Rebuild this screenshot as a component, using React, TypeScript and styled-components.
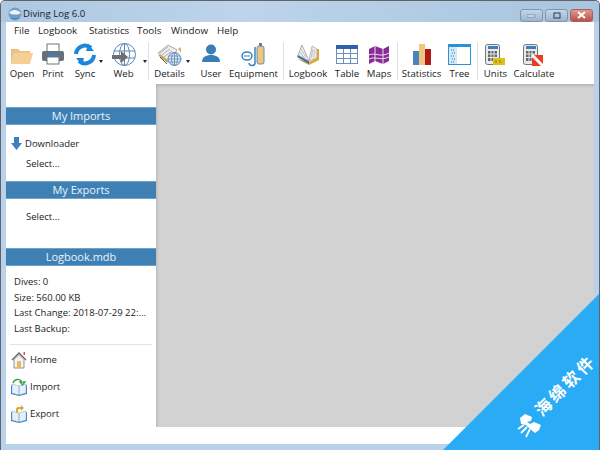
import React from "react";
import styled, { createGlobalStyle } from "styled-components";

const Global = createGlobalStyle`
  html, body { margin: 0; padding: 0; width: 600px; height: 450px; overflow: hidden; }
  body { font-family: "Open Sans", "Noto Sans", "Liberation Sans", sans-serif; }
`;
const Win = styled.div`
  position: relative; width: 600px; height: 450px; box-sizing: border-box; overflow: hidden;
  display: flex; flex-direction: column;
  border: 1px solid #5f6468; border-bottom: 0; border-radius: 5px 5px 0 0;
  background: #b9d1ea;
`;
const TitleBar = styled.div`
  height: 21px; display: flex; align-items: center; padding: 4px 0 0 7px; box-sizing: border-box; flex: none;
  background: linear-gradient(90deg, #aec8e2 0%, #bdd4ea 40%, #a9c4df 100%);
`;
const TitleLabel = styled.span`
  font-size: 9.600px; color: #14202c; margin-left: 1px; flex: 1;
`;
const WinBtns = styled.div` display: flex; gap: 2px; margin-right: 6px; margin-top: 3px; `;
const WinBtn = styled.div<{ $close?: boolean }>`
  width: 23px; height: 13px; box-sizing: border-box; border: 1px solid ${(p) => (p.$close ? "#a8605c" : "#7d95ae")};
  border-radius: 3px; display: flex; align-items: center; justify-content: center;
  background: ${(p) => (p.$close ? "linear-gradient(180deg,#dc9a92,#bd5048)" : "linear-gradient(180deg,#c4d6e9,#9bb5d0)")};
`;
const Client = styled.div`
  margin: 0 5px; flex: none; height: 422px; background: #fff; display: flex; flex-direction: column;
`;
const MenuBar = styled.div`
  height: 17px; display: flex; align-items: center; padding-left: 8px; flex: none;
  font-size: 9.8px; color: #1b1b1b;
`;
const MenuItem = styled.span<{ $w: number }>` width: ${(p) => p.$w}px; flex: none; `;
const Toolbar = styled.div`
  height: 45px; padding-top: 3px; box-sizing: border-box; display: flex; align-items: flex-start; flex: none;
`;
const Tool = styled.div<{ $w: number; $ml?: number }>`
  width: ${(p) => p.$w}px; margin-left: ${(p) => p.$ml ?? 0}px; flex: none; display: flex; flex-direction: column; align-items: center;
  font-size: 9.6px; color: #222; position: relative;
  svg { display: block; height: 25px; flex: none; }
`;
const ToolText = styled.span` line-height: 13px; white-space: nowrap; `;
const Caret = styled.i<{ $r: number }>`
  position: absolute; right: ${(p) => p.$r}px; top: 18px; width: 0; height: 0;
  border-left: 2.500px solid transparent; border-right: 2.500px solid transparent; border-top: 3px solid #222;
`;
const Sep = styled.div<{ $l: number; $r: number }>`
  width: 1px; height: 38px; margin: 0 ${(p) => p.$r}px 0 ${(p) => p.$l}px; background: #dde0e3; flex: none;
`;
const Main = styled.div` display: flex; height: 343px; flex: none; `;
const Side = styled.div`
  width: 150px; flex: none; background: #fff; display: flex; flex-direction: column;
`;
const Gray = styled.div`
  flex: 1; background: #d2d2d2; box-shadow: inset 2px 3px 3px -1px #b5b5b5;
`;
const Head = styled.div<{ $mt: number }>`
  height: 18px; box-sizing: border-box; margin-top: ${(p) => p.$mt}px; background: #3f80b4; color: #eaf3fa; flex: none;
  font-size: 11px; line-height: 16px; text-align: center; border-top: 1px solid #6fa3cc; border-bottom: 1px solid #6fa3cc;
`;
const Row = styled.div<{ $mt: number; $pl: number }>`
  display: flex; align-items: center; font-size: 9.5px; color: #222; height: 14px; flex: none;
  margin-top: ${(p) => p.$mt}px; padding-left: ${(p) => p.$pl}px; gap: 3px;
`;
const Info = styled.div`
  font-size: 9.5px; color: #222; height: 15.7px; line-height: 15.7px; padding-left: 8px; white-space: nowrap;
`;
const InfoBox = styled.div` margin-top: 8px; flex: none; `;
const Rule = styled.div` height: 1px; flex: none; background: #e2e2e2; margin: 7px 4px 0 4px; `;
const Nav = styled.div`
  height: 27px; display: flex; align-items: center; gap: 3px; padding-left: 5px; font-size: 9.500px; color: #222;
  svg { flex: none; }
`;
const NavList = styled.div` margin-top: 1.500px; flex: none; height: 81px; `;
const Ribbon = styled.div`
  position: absolute; right: -1px; bottom: 0; width: 157px; height: 157px;
`;
const RibbonShape = styled.div`
  position: absolute; inset: 0; background: #29abf5; clip-path: polygon(100% 0, 100% 100%, 0 100%);
`;
const RibbonText = styled.span`
  position: absolute; left: 122px; top: 92px; color: #fff; font-size: 16.500px; font-weight: 700; letter-spacing: 3px;
  font-family: "Noto Sans CJK SC", sans-serif; transform: translate(-50%, -50%) rotate(-45deg); white-space: nowrap; line-height: 17px;
`;
const RibbonLogo = styled.svg`
  position: absolute; left: 74px; top: 121px;
`;

const Folder = () => (
  <svg width="24" height="25" viewBox="0 0 24 25"><path d="M1 7h7l2 2h10v3H1z" fill="#dcb878" /><path d="M1 22 4 11h19l-3 11z" fill="#f5cf93" /><path d="M1 8v14l3-11h16V9H9L7 7z" fill="#e9c286" /></svg>
);
const Printer = () => (
  <svg width="24" height="25" viewBox="0 0 24 25"><rect x="6" y="2" width="12" height="8" fill="#fff" stroke="#6f7780" /><rect x="1" y="9" width="22" height="10" rx="2" fill="#66707a" /><rect x="6" y="15" width="12" height="7" fill="#fff" stroke="#6f7780" /><rect x="7" y="12" width="10" height="2" fill="#3a80c0" /></svg>
);
const Sync = () => (
  <svg width="24" height="25" viewBox="0 0 24 25" fill="none"><path d="M3 12A9 9 0 0 1 18 6" stroke="#1c86dc" strokeWidth="4" /><path d="m15 2 6 7-8 0z" fill="#1c86dc" /><path d="M21 13A9 9 0 0 1 6 19" stroke="#1c86dc" strokeWidth="4" /><path d="m9 23-6-7 8 0z" fill="#1c86dc" /></svg>
);
const Web = () => (
  <svg width="24" height="25" viewBox="0 0 24 25" fill="none" stroke="#5d86b8" strokeWidth="1"><circle cx="12.500" cy="12.500" r="11" /><ellipse cx="12.500" cy="12.500" rx="5" ry="11" /><path d="M2 9h21M2 16h21M12.500 1.500v22" /><path d="M0 13h9V9l7 6-7 6v-4H0z" fill="#6e6e6e" stroke="none" /></svg>
);
const Book = () => (
  <svg width="26" height="25" viewBox="0 0 26 25"><path d="M2 17 14 23l10-5V7l-2 0v9l-8 4z" fill="#e0a92e" /><path d="M2 15 14 22V19L3 13z" fill="#3a74b0" /><path d="M7 3 14 19 3 13z" fill="#f2f2f2" stroke="#8f8f8f" strokeWidth=".7" /><path d="M5.500 6.500 11 15M4.500 9.500 9.500 16" stroke="#a8a8a8" strokeWidth=".8" /><path d="m14 19 3-15 5 3v9z" fill="#e8e8e8" stroke="#a0a0a0" strokeWidth=".7" /><path d="m16 16 2-9M18.500 15l1-7" stroke="#c2c2c2" strokeWidth=".8" /></svg>
);
const Details = () => (
  <svg width="26" height="25" viewBox="0 0 26 25"><path d="M1 11 11 3l9 5-7 12z" fill="#efefef" stroke="#8a8a8a" strokeWidth=".7" /><path d="M3 11l8-6M5 13l8-6M7 15l8-6" stroke="#999" strokeWidth=".8" /><path d="M2 13 11 20" stroke="#d2a344" strokeWidth="2" /><path d="M3 15 10 22" stroke="#555" strokeWidth="1" /><circle cx="17.500" cy="17" r="6.500" fill="#dfeaf5" stroke="#5d86b8" /><path d="M11 17h13M17.500 10.500v13M12 14h11M12 20h11" stroke="#5d86b8" strokeWidth=".8" /><ellipse cx="17.500" cy="17" rx="3" ry="6.500" fill="none" stroke="#5d86b8" strokeWidth=".8" /><path d="M21 7l3-2v6z" fill="#d8b35a" /></svg>
);
const User = () => (
  <svg width="22" height="25" viewBox="0 0 22 25"><circle cx="11" cy="7.500" r="5" fill="#3a7cb8" /><path d="M2 20c0-5 4-7 9-7s9 2 9 7z" fill="#3a7cb8" /></svg>
);
const Equipment = () => (
  <svg width="26" height="25" viewBox="0 0 26 25" fill="none"><rect x="16" y="4" width="7" height="18" rx="2" fill="#f0c77a" stroke="#5b8fbe" /><rect x="18" y="1" width="3" height="3" fill="#777" /><path d="M14 5v15a3 3 0 0 1-6 1" stroke="#3a80c0" strokeWidth="1.500" /><ellipse cx="6" cy="14" rx="5" ry="4" stroke="#3a80c0" strokeWidth="1.500" /><path d="M3 14h6" stroke="#3a80c0" /></svg>
);
const Table = () => (
  <svg width="22" height="25" viewBox="0 0 22 25" fill="#fff" stroke="#6c8fbb" strokeWidth="1"><rect x="0.500" y="3.500" width="21" height="18" /><rect x="0" y="3" width="22" height="4" fill="#2f5fae" stroke="none" /><path d="M7.500 7v14M14.500 7v14M0 11.500h22M0 16.500h22" fill="none" /></svg>
);
const Maps = () => (
  <svg width="22" height="25" viewBox="0 0 22 25"><path d="M1 7 7 4l8 3 6-3v15l-6 3-8-3-6 3z" fill="#8a2a96" /><path d="M7 4v15M15 7v15M1 13c6-3 12 3 20-2M1 17c6-3 12 2 20-2" stroke="#efdff2" strokeWidth="1" fill="none" /></svg>
);
const Stats = () => (
  <svg width="18" height="25" viewBox="0 0 18 25"><rect x="0" y="9" width="6" height="14" fill="#4a86bb" /><rect x="6" y="2" width="6" height="21" fill="#efc67f" /><rect x="12" y="7" width="6" height="16" fill="#b01a16" /></svg>
);
const Tree = () => (
  <svg width="23" height="25" viewBox="0 0 23 25"><rect x=".5" y="2.500" width="22" height="20" fill="#fff" stroke="#2a93d8" /><rect x="0" y="2" width="23" height="3" fill="#2a93d8" /><rect x="1" y="5" width="8" height="17" fill="#d4e8f5" /><path d="M3 8h3M4 11h3M3 14h3M4 17h3M3 20h3" stroke="#2a7fc0" strokeDasharray="1 1" /></svg>
);
const Calc = ({ k }: { k: "units" | "calc" }) => (
  <svg width="22" height="25" viewBox="0 0 22 25"><rect x=".5" y="2.500" width="14" height="20" rx="2" fill="#e9e9e9" stroke="#777" /><rect x="3" y="4" width="10" height="3" fill="#3a80c0" /><path d="M3 9h9v10H3z" fill="#666" /><path d="M6 9v10M9 9v10M3 12h9M3 15.500h9" stroke="#e9e9e9" />{k === "units" ? <><rect x="8" y="16" width="12" height="7" fill="#dcbf1a" /><path d="M11 18v3M15 18v3" stroke="#8f7a0c" /></> : <><rect x="9" y="13" width="11" height="11" fill="#ef3a22" /><path d="m9 13 11 11" stroke="#fff" strokeWidth="3" /></>}</svg>
);
const DownArrow = () => (
  <svg width="11" height="13" viewBox="0 0 11 13"><path d="M3 0h5v6h3l-5.500 7L0 6h3z" fill="#3f7fc0" /></svg>
);
const House = () => (
  <svg width="16" height="18" viewBox="0 0 16 18"><path d="M1 9 8 2l7 7" fill="none" stroke="#666" strokeWidth="1.400" /><path d="M3 8.500v8.500h10V8.500L8 3.500z" fill="#f4f4f4" stroke="#777" strokeWidth=".8" /><rect x="6" y="10" width="4" height="7" fill="#eeb65f" /><rect x="12.500" y="1" width="1.500" height="3" fill="#d44" /></svg>
);
const NavBook = ({ k }: { k: "i" | "e" }) => (
  <svg width="16" height="18" viewBox="0 0 16 18"><path d="M0 7v9l8 2 8-2V7l-8 2z" fill="#3a80c0" /><path d="M1 6v9l7 2V8zM15 6v9l-7 2V8z" fill="#e6f0f8" stroke="#7da7cc" strokeWidth=".5" />{k === "i" ? <path d="M2 5c1-4 7-5 9-1l-2 0 2.500 3L14 4h-2" fill="none" stroke="#3aa04a" strokeWidth="1.300" /> : <path d="M5 8V4c0-2 3-2 5-2V0l3 3-3 3V4C8 4 7 4 7 5v3z" fill="#d9a93a" />}</svg>
);

export default function App() {
  return (
    <Win>
      <Global />
      <TitleBar>
        <svg width="14" height="14" viewBox="0 0 14 14"><circle cx="7" cy="7" r="6.500" fill="#6f9fc8" /><path d="M1 6c3-4 8-4 12 0-3 2-8 2-12 0z" fill="#f2f4f6" /><path d="M2 10c3 2 7 2 10 0-2 3-8 3-10 0z" fill="#3a6f8f" /></svg>
        <TitleLabel>Diving Log 6.0</TitleLabel>
        <WinBtns>
          <WinBtn><svg width="9" height="5"><rect y="2" width="8" height="2" fill="#f5f8fb" stroke="#46586c" strokeWidth=".5" /></svg></WinBtn>
          <WinBtn><svg width="8" height="7"><rect x="1" y="1" width="6" height="5" fill="none" stroke="#2e3c4c" strokeWidth="1" /></svg></WinBtn>
          <WinBtn $close><svg width="9" height="8"><path d="m1 1 7 6M8 1 1 7" stroke="#fff" strokeWidth="2" /></svg></WinBtn>
        </WinBtns>
      </TitleBar>
      <Client>
        <MenuBar>
          <MenuItem $w={24}>File</MenuItem>
          <MenuItem $w={51}>Logbook</MenuItem>
          <MenuItem $w={48}>Statistics</MenuItem>
          <MenuItem $w={34}>Tools</MenuItem>
          <MenuItem $w={46}>Window</MenuItem>
          <MenuItem $w={30}>Help</MenuItem>
        </MenuBar>
        <Toolbar>
          <Tool $w={32}><Folder /><ToolText>Open</ToolText></Tool>
          <Tool $w={30}><Printer /><ToolText>Print</ToolText></Tool>
          <Tool $w={34}><Sync /><ToolText>Sync</ToolText><Caret $r={-1} /></Tool>
          <Tool $w={43}><Web /><ToolText>Web</ToolText><Caret $r={-2} /></Tool>
          <Sep $l={3} $r={3} />
          <Tool $w={35}><Details /><ToolText>Details</ToolText><Caret $r={-3} /></Tool>
          <Tool $w={48}><User /><ToolText>User</ToolText></Tool>
          <Tool $w={37}><Equipment /><ToolText>Equipment</ToolText></Tool>
          <Sep $l={11} $r={4} />
          <Tool $w={40}><Book /><ToolText>Logbook</ToolText></Tool>
          <Tool $w={38}><Table /><ToolText>Table</ToolText></Tool>
          <Tool $w={26}><Maps /><ToolText>Maps</ToolText></Tool>
          <Sep $l={5} $r={5} />
          <Tool $w={37}><Stats /><ToolText>Statistics</ToolText></Tool>
          <Tool $w={25} $ml={7}><Tree /><ToolText>Tree</ToolText></Tool>
          <Sep $l={5} $r={5} />
          <Tool $w={25}><Calc k="units" /><ToolText>Units</ToolText></Tool>
          <Tool $w={52}><Calc k="calc" /><ToolText>Calculate</ToolText></Tool>
        </Toolbar>
        <Main>
          <Side>
            <Head $mt={23}>My Imports</Head>
            <Row $mt={11} $pl={5}><DownArrow /><span>Downloader</span></Row>
            <Row $mt={6} $pl={20}>Select...</Row>
            <Head $mt={11}>My Exports</Head>
            <Row $mt={10} $pl={20}>Select...</Row>
            <Head $mt={25}>Logbook.mdb</Head>
            <InfoBox>
              <Info>Dives: 0</Info>
              <Info>Size: 560.00 KB</Info>
              <Info>Last Change: 2018-07-29 22:...</Info>
              <Info>Last Backup:</Info>
            </InfoBox>
            <Rule />
            <NavList>
              <Nav><House /><span>Home</span></Nav>
              <Nav><NavBook k="i" /><span>Import</span></Nav>
              <Nav><NavBook k="e" /><span>Export</span></Nav>
            </NavList>
          </Side>
          <Gray />
        </Main>
      </Client>
      <Ribbon>
        <RibbonShape />
        <RibbonText>海绵软件</RibbonText>
        <RibbonLogo width="24" height="24" viewBox="0 0 24 24">
          <path d="M3 4 8 0l7 3-1 4-4 1 3 2 4-2 7 3-2 5-4 3-6-5-3-3-5-1z" fill="#fff" />
          <path d="M7 11 1 15M10 13 4 19M13 15 9 23" stroke="#fff" strokeWidth="1.800" fill="none" />
        </RibbonLogo>
      </Ribbon>
    </Win>
  );
}
